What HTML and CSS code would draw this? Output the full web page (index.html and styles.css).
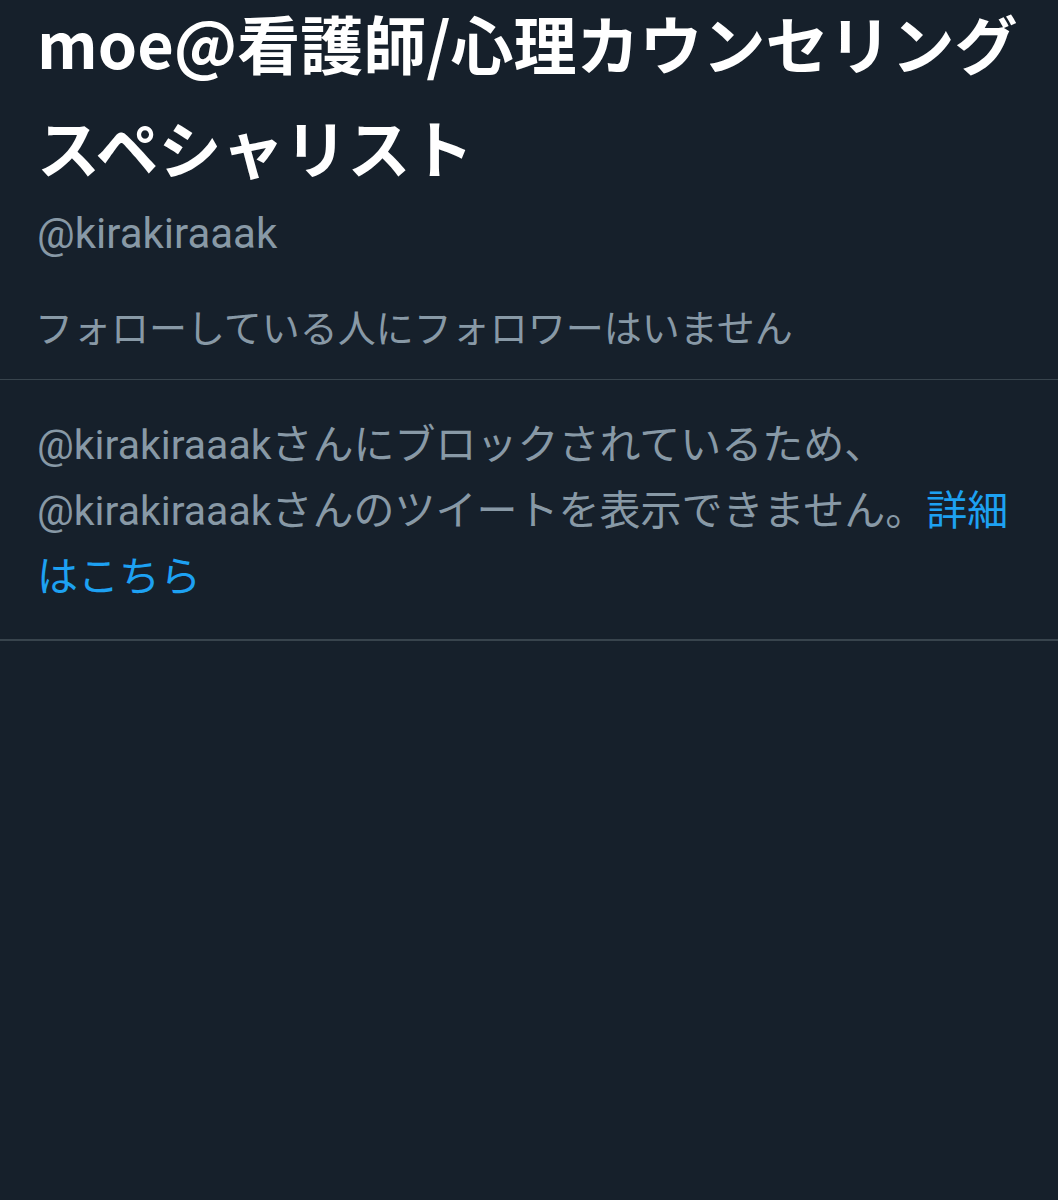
FILE: index.html
```html
<!DOCTYPE html>
<html lang="ja">
<head>
<meta charset="utf-8">
<link rel="stylesheet" href="styles.css">
</head>
<body>
<div class="page">
  <section class="profile">
    <h1 class="name">moe@看護師/心理カウンセリングスペシャリスト</h1>
    <div class="handle">@kirakiraaak</div>
    <div class="followers">フォローしている人にフォロワーはいません</div>
  </section>
  <section class="blocked">
    <p class="msg">@kirakiraaakさんにブロックされているため、<br>@kirakiraaakさんのツイートを表示できません。<a class="link" href="#">詳細はこちら</a></p>
  </section>
</div>
</body>
</html>
```
FILE: styles.css
```css
html, body {
  margin: 0;
  padding: 0;
  background: #16202b;
}
.page {
  width: 1058px;
  height: 1200px;
  background: #16202b;
  font-family: Roboto, "Noto Sans CJK JP", sans-serif;
}
.profile {
  display: flow-root;
  padding: 0 37px;
  border-bottom: 1px solid #38444d;
  height: 380px;
  box-sizing: border-box;
}
.name {
  margin: -10px 0 0 0;
  font-family: "Noto Sans CJK JP", sans-serif;
  font-weight: 700;
  font-size: 63px;
  line-height: 104px;
  color: #ffffff;
}
.handle {
  margin-top: 8px;
  font-size: 42px;
  line-height: 56px;
  color: #8899a6;
}
.followers {
  margin-top: 39px;
  margin-left: -2px;
  font-size: 38px;
  line-height: 56px;
  color: #8899a6;
}
.blocked {
  padding: 32px 37px 0 37px;
  height: 261px;
  box-sizing: border-box;
  border-bottom: 2px solid #38444d;
}
.msg {
  margin: 0;
  font-size: 41px;
  line-height: 66px;
  color: #8899a6;
}
.link {
  color: #1da1f2;
  text-decoration: none;
}
```
